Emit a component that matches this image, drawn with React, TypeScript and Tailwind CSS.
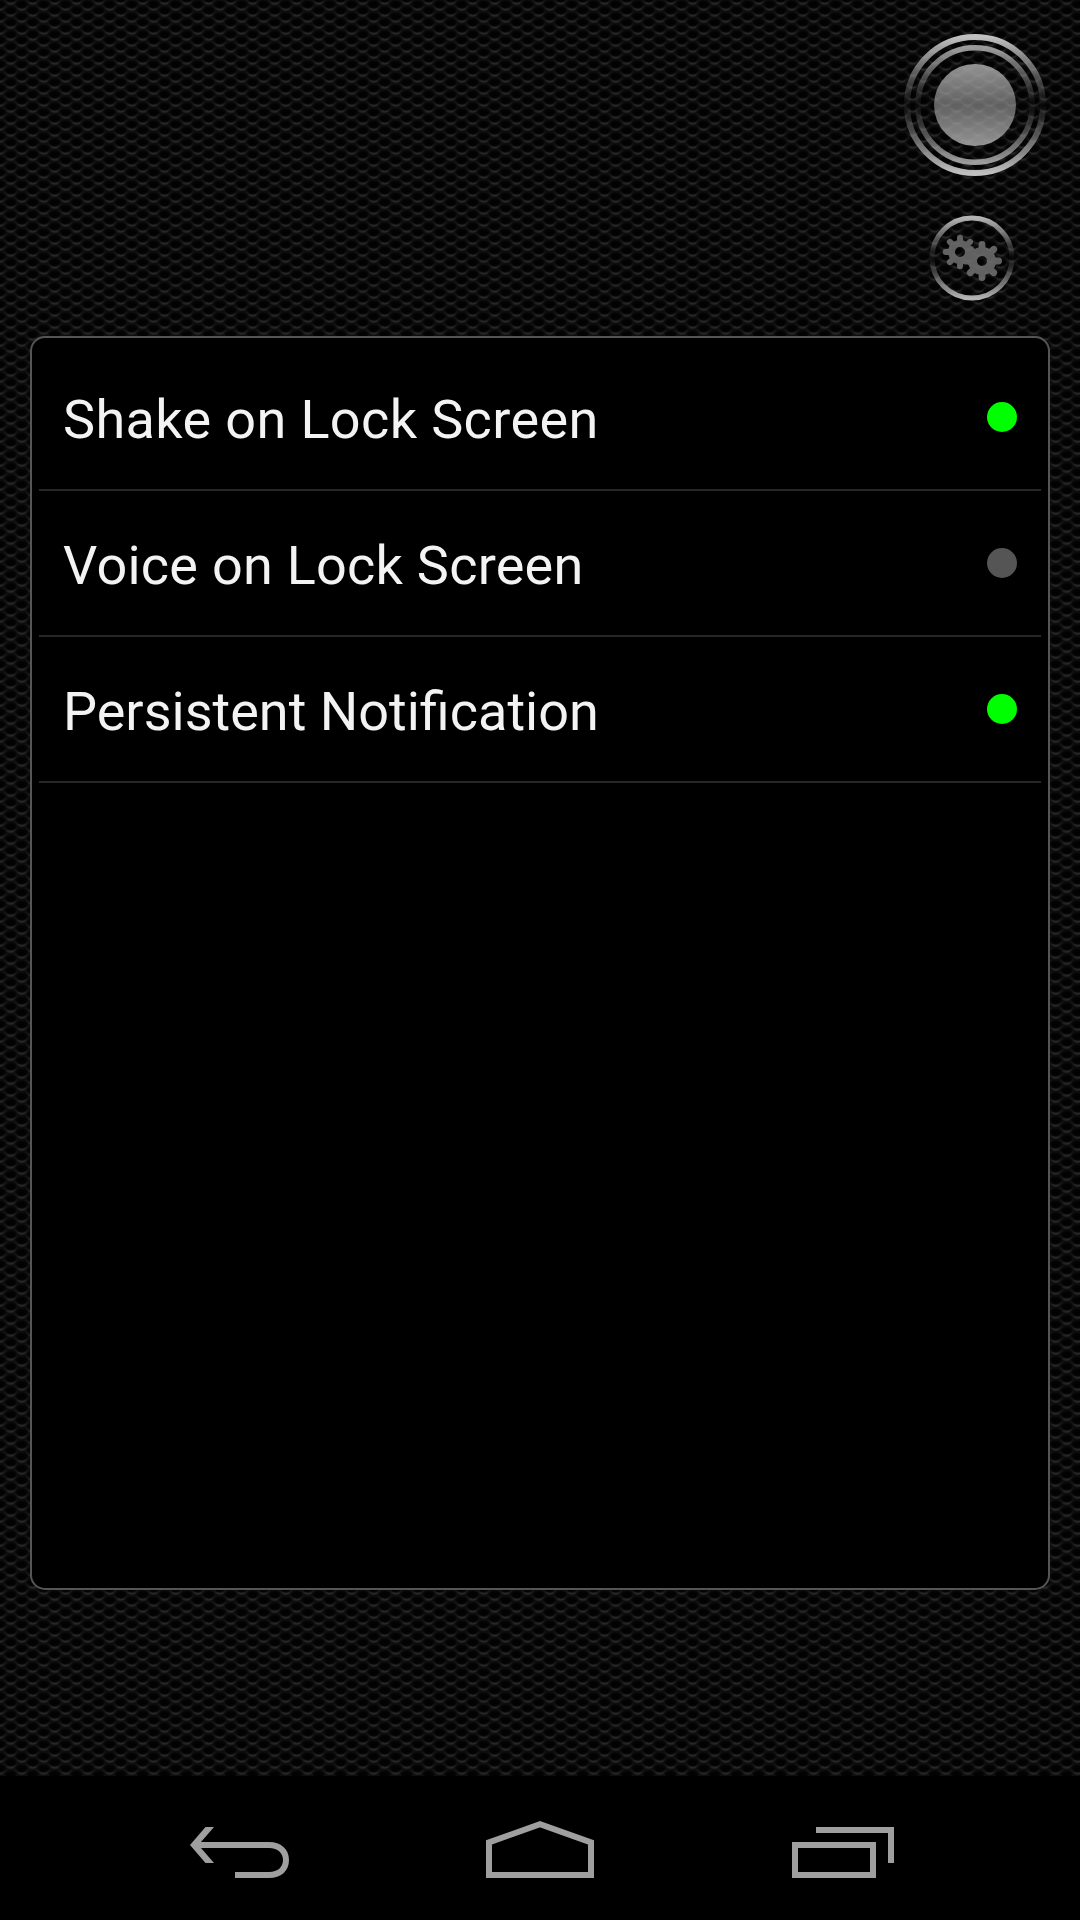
import React from "react";

const settings = [
  { id: "shake", label: "Shake on Lock Screen", enabled: true, spacing: "tracking-[0.37px]" },
  { id: "voice", label: "Voice on Lock Screen", enabled: false, spacing: "tracking-[0.25px]" },
  { id: "notification", label: "Persistent Notification", enabled: true, spacing: "tracking-normal" },
];

const toothAngles = [0, 45, 90, 135, 180, 225, 270, 315];

const MeshBackground = () => (
  <svg className="absolute inset-0 w-full h-full" aria-hidden="true">
    <defs>
      <linearGradient id="rim" gradientUnits="userSpaceOnUse" x1="-8" x2="8" y1="0" y2="0">
        <stop offset="0" stopColor="#2a2a2a" stopOpacity="0" />
        <stop offset="0.2" stopColor="#2a2a2a" stopOpacity="0.35" />
        <stop offset="0.4" stopColor="#2a2a2a" stopOpacity="0.9" />
        <stop offset="0.6" stopColor="#2a2a2a" stopOpacity="0.9" />
        <stop offset="0.8" stopColor="#2a2a2a" stopOpacity="0.35" />
        <stop offset="1" stopColor="#2a2a2a" stopOpacity="0" />
      </linearGradient>
      <radialGradient id="hole">
        <stop offset="0" stopColor="#010101" />
        <stop offset="0.5" stopColor="#030303" />
        <stop offset="1" stopColor="#030303" stopOpacity="0" />
      </radialGradient>
      <g id="cell">
        <ellipse cx="0" cy="-5.5" rx="8" ry="5" fill="url(#hole)" />
        <path d="M-8-6.5C-6-2-3-.3 0-.3S6-2 8-6.5" fill="none" stroke="url(#rim)" strokeWidth="2" />
      </g>
      <pattern id="mesh" width="22" height="12" patternUnits="userSpaceOnUse">
        <rect width="22" height="12" fill="#0e0e0e" />
        <use href="#cell" x="10.7" y="4" />
        <use href="#cell" x="10.7" y="16" />
        <use href="#cell" x="-0.3" y="10" />
        <use href="#cell" x="21.7" y="10" />
      </pattern>
    </defs>
    <rect width="100%" height="100%" fill="url(#mesh)" />
  </svg>
);

type GearProps = { cx: number; cy: number; body: number; outer: number; tooth: number };

const Gear = ({ cx, cy, body, outer, tooth }: GearProps) => (
  <g transform={`translate(${cx} ${cy})`} stroke="#737373" fill="none">
    <circle r={(body + 5) / 2} strokeWidth={body - 5} />
    {toothAngles.map((angle) => (
      <path
        key={angle}
        d={`M0 ${-(body - 2)}V${-(outer - tooth / 2)}`}
        strokeWidth={tooth}
        strokeLinecap="round"
        transform={`rotate(${angle})`}
      />
    ))}
  </g>
);

const PowerButton = () => (
  <button aria-label="Toggle light" className="w-[142px] h-[142px]">
    <svg viewBox="0 0 142 142" className="w-full h-full">
      <defs>
        <linearGradient id="ring" x1="0" x2="0" y1="0" y2="1">
          <stop offset="0" stopColor="#c0c0c0" />
          <stop offset="0.2" stopColor="#b0b0b0" stopOpacity="0.66" />
          <stop offset="0.5" stopColor="#a0a0a0" stopOpacity="0.02" />
          <stop offset="0.8" stopColor="#b0b0b0" stopOpacity="0.66" />
          <stop offset="1" stopColor="#c0c0c0" />
        </linearGradient>
        <linearGradient id="lens" x1="0" x2="0" y1="0" y2="1">
          <stop offset="0" stopColor="#b0b0b0" stopOpacity="0.83" />
          <stop offset="0.5" stopColor="#b0b0b0" stopOpacity="0.54" />
          <stop offset="1" stopColor="#b0b0b0" stopOpacity="0.83" />
        </linearGradient>
      </defs>
      <circle cx="71" cy="71" r="68" fill="none" stroke="url(#ring)" strokeWidth="6" />
      <circle cx="71" cy="71" r="57.2" fill="none" stroke="url(#ring)" strokeWidth="5.5" opacity="0.8" />
      <circle cx="71" cy="71" r="41" fill="url(#lens)" />
    </svg>
  </button>
);

const SettingsButton = () => (
  <button aria-label="Settings" className="w-[86px] h-[86px]">
    <svg viewBox="0 0 86 86" className="w-full h-full">
      <circle cx="43" cy="43" r="40" fill="none" stroke="url(#ring)" strokeWidth="5" opacity="0.93" />
      <g opacity="0.84">
        <Gear cx={31} cy={37} body={12} outer={17.3} tooth={6} />
        <Gear cx={53} cy={46} body={14} outer={20} tooth={6.8} />
      </g>
    </svg>
  </button>
);

const NavBar = () => (
  <nav className="relative flex h-36 items-end bg-black pb-[42px] pl-[190px] text-[#9f9f9f]">
    <button aria-label="Back">
      <svg width="99" height="51" viewBox="0 0 99 51" fill="currentColor">
        <path d="M0 18L15.5 0H24L11 15H79C91 15 99 22 99 33S91 51 79 51H45V45H79C88 45 93 40 93 33S88 21 79 21H11L24 36H15.5Z" />
      </svg>
    </button>
    <button aria-label="Home" className="ml-[197px]">
      <svg width="108" height="57" viewBox="0 0 108 57" fill="none" stroke="currentColor" strokeWidth="6">
        <path d="M3 54V21.4L54 3.2L105 21.4V54Z" />
      </svg>
    </button>
    <button aria-label="Recent apps" className="ml-[198px]">
      <svg width="102" height="51" viewBox="0 0 102 51" fill="none" stroke="currentColor" strokeWidth="6">
        <path d="M3 18H81V48H3ZM24 3H99V36" />
      </svg>
    </button>
  </nav>
);

const App = () => {
  return (
    <div className="relative flex h-[1920px] w-[1080px] flex-col overflow-hidden bg-[#0b0b0b] font-['Roboto',sans-serif]">
      <MeshBackground />

      {/* Light and settings buttons */}
      <header className="relative flex h-[336px] flex-col items-end pt-[34px] pr-[34px]">
        <PowerButton />
        <div className="mt-[39px] mr-[31px]">
          <SettingsButton />
        </div>
      </header>

      {/* Options */}
      <main className="relative mx-[30px] h-[1254px] rounded-[15px] border-2 border-[#555555] bg-black px-[7px] pt-[7px]">
        {settings.map((item) => (
          <div
            key={item.id}
            className="flex h-[146px] items-center justify-between border-b-2 border-[#272727] pr-6 pl-6"
          >
            <span className={`pt-1.5 text-[54px] leading-[64px] whitespace-nowrap text-[#f3f3f3] ${item.spacing}`}>
              {item.label}
            </span>
            <span
              className={`h-[30px] w-[30px] rounded-full ${item.enabled ? "bg-[#00ff00]" : "bg-[#555555]"}`}
            />
          </div>
        ))}
      </main>

      <div className="flex-1" />
      <NavBar />
    </div>
  );
};

export default App;
